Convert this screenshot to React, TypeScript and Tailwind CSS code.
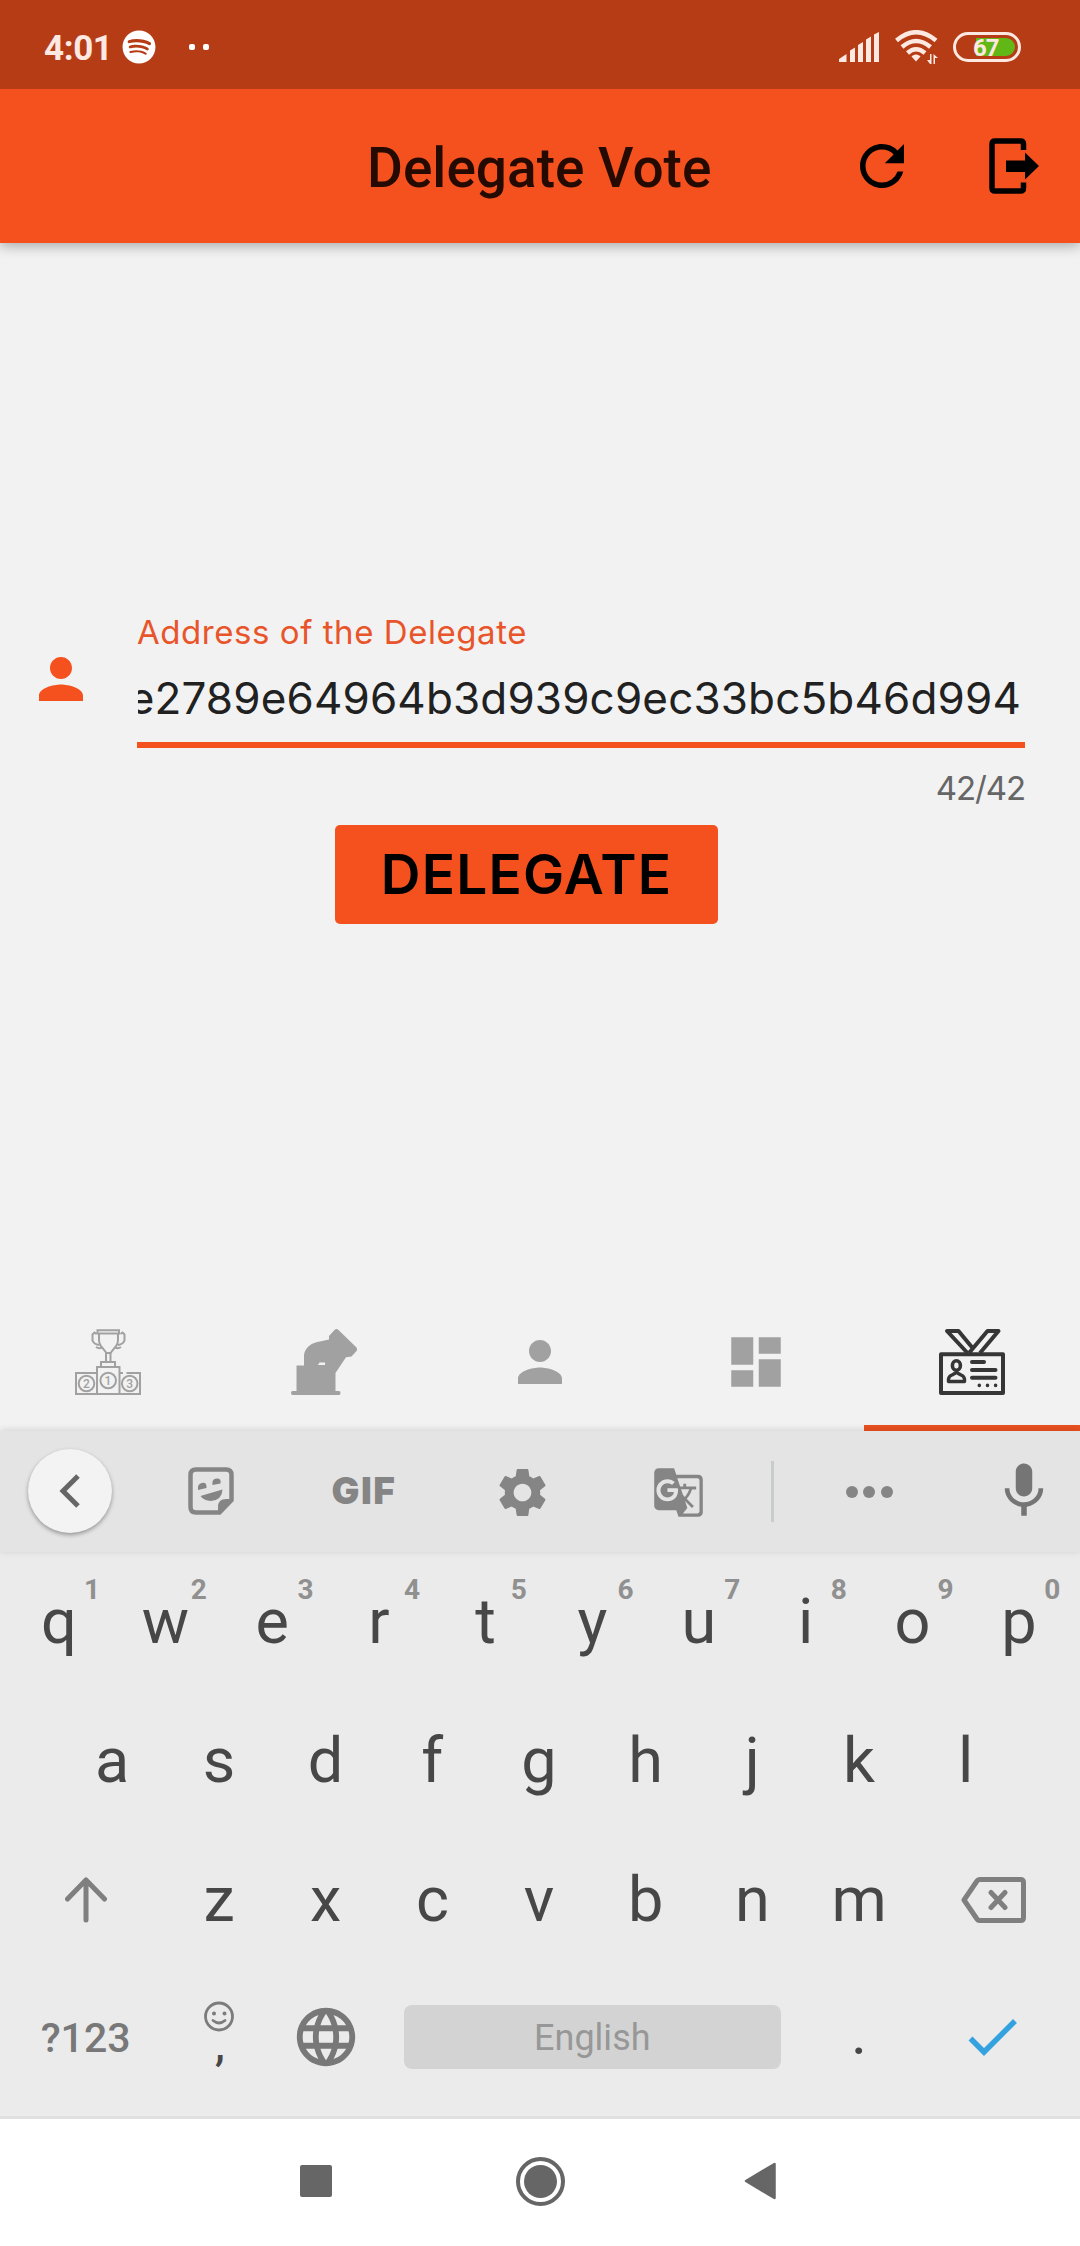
import React from "react";
import { MdRefresh, MdPerson, MdDashboard, MdSettings, MdGTranslate, MdMic, MdLanguage } from "react-icons/md";
import { FaSpotify } from "react-icons/fa";

function StatusBar() {
  return (
    <div className="relative z-20 flex h-[89px] items-center bg-[#b63c16] pl-[44px] pr-[59px] pt-[5px] font-[Roboto,sans-serif] text-[#fde8e2]">
      <span className="w-[78px] pt-[3px] text-[35px] leading-[40px] font-bold tracking-[-0.4px]">4:01</span>
      <FaSpotify className="size-[34px] text-white" />
      <div className="ml-[33px] flex gap-2">
        <i className="size-1.5 rounded-[2px] bg-white" />
        <i className="size-1.5 rounded-[2px] bg-white" />
      </div>
      <svg className="ml-auto" width="40" height="30" viewBox="0 0 40 30" fill="currentColor">
        <path d="M0 27l7.500-5V30H0zM11 18.500l5-3V30h-5zM19 13l5-3V30h-5zM27 7.500l5-3V30h-5zM35 2.500l5-2.500V30h-5z" />
      </svg>
      <svg className="ml-4" width="43" height="34" viewBox="0 0 43 34">
        <g fill="none" stroke="currentColor" strokeWidth="4.500">
          <path d="M1.500 10.500Q21 -6 41 10.500" />
          <path d="M7 17Q21 5 35.500 17" />
          <path d="M12.500 23Q21 15.500 30 23" />
        </g>
        <path d="M21 24.500c2 0 3.500 1 4.500 2L21 31.500l-4.500-5c1-1 2.500-2 4.500-2zM35 24h1.500v10H35l-3-4h3zM38.500 34V24l4.500 4h-3v6z" fill="currentColor" />
      </svg>
      <div className="ml-[15px] flex h-[30px] w-[68px] items-center rounded-full border-[3px] border-[#fde8e2] p-[3px]">
        <div className="relative ml-[17px] h-[18px] flex-1 rounded-r-full bg-[#61b715]">
          <span className="absolute -left-[3px] top-0 text-[24px] leading-[20px] font-bold tracking-[-1px]">67</span>
        </div>
      </div>
    </div>
  );
}

function AppBar() {
  return (
    <header className="relative z-10 flex h-[154px] items-center bg-[#f5511e] pl-[367px] pr-[40px] shadow-[0_3px_12px_rgba(0,0,0,0.3)]">
      <h1 className="w-[482px] pt-[3px] font-[Roboto,sans-serif] text-[55px] leading-[64px] font-medium text-[#240a01]">Delegate Vote</h1>
      <MdRefresh className="size-[66px] text-black" />
      <svg className="ml-auto" width="51" height="56" viewBox="0 0 51 56">
        <path d="M34.500 12V6q0-3-3-3H6Q3 3 3 6v44q0 3 3 3h25.500q3 0 3-3v-5.500" fill="none" stroke="#000" strokeWidth="5.500" />
        <path d="M17 22.500h19v-8L50 28 36 41.500V34H17z" />
      </svg>
    </header>
  );
}

function DelegateForm() {
  return (
    <main className="flex h-[1065px] flex-col items-start pt-[366px] font-[Inter,sans-serif]">
      <div className="flex w-full pl-[27.500px]">
        <MdPerson className="mt-[37px] size-[66px] text-[#f5511e]" />
        <div className="ml-[43.500px] w-[888px]">
          <div className="h-[46px] text-[33px] leading-[46px] tracking-[0.550px] whitespace-nowrap text-[#e9552b]">Address of the Delegate</div>
          <div className="mt-[17px] ml-px flex h-[70px] justify-end overflow-hidden pr-[4px] text-[44px] leading-[52px] tracking-[0.150px] text-[#212121]">
            <span>e2789e64964b3d939c9ec33bc5b46d994</span>
          </div>
          <div className="h-1.5 bg-[#f5511e]" />
          <div className="mt-[17px] text-right text-[33px] leading-[46px] tracking-[-1.100px] text-[#666]">42/42</div>
        </div>
      </div>
      <button className="mt-[13.500px] ml-[335px] h-[99px] w-[383px] rounded-[5px] bg-[#f5511e] text-[55px] leading-[99px] font-semibold tracking-[1.200px] text-black">
        DELEGATE
      </button>
    </main>
  );
}

function PodiumIcon() {
  return (
    <svg width="66" height="66" viewBox="0 0 66 66" fill="none" stroke="#a1a1a1" strokeWidth="2">
      <path d="M22 44H1v21h64V44H51.500M48 44h-3.500M22 65V38h22.500v27" />
      <path d="M26 37.500v-4.500h14v4.500M31 33v-9.500M35.500 33v-9.500" />
      <path d="M22.500 4.500V1.300h21.500v3.200zM24 4.500v6q0 5 3.500 8.500l4 5h4l4-5q3.500-3.500 3.500-8.500v-6M21.500 5l-2-1.500-2 2v6q1 3.500 6.500 4.500M45.500 5l2-1.500 2 2v6q-1 3.500-6.500 4.500M21 18q3 2 6 .5M46 18q-3 2-6 .5" />
      <circle cx="11.500" cy="54.500" r="7.800" />
      <circle cx="33.200" cy="51.500" r="7.800" />
      <circle cx="54.700" cy="54.500" r="7.800" />
      <g fill="#a1a1a1" stroke="none" fontFamily="Roboto, sans-serif" fontSize="12" fontWeight="500" textAnchor="middle">
        <text x="11.500" y="58.800">2</text>
        <text x="33" y="55.800">1</text>
        <text x="54.700" y="58.800">3</text>
      </g>
    </svg>
  );
}

function VoteIcon() {
  return (
    <svg width="66" height="66" viewBox="0 0 66 66" fill="#a1a1a1">
      <path fillRule="evenodd" d="M1.500 62H5.500V36.500H13V26C14 18 21 13.500 29 12.500L38 10.500V7L43.500 1Q45.500-.8 47.500 1L65.500 18.500Q66.500 20 65.500 22L60.500 27.500L55 28.200L44.500 44V62H48Q49.500 62 49.500 64T48 66H1.500Q0 66 0 64T1.500 62zM27 36h7v-2.500h-5.500z" />
    </svg>
  );
}

function BadgeIcon() {
  return (
    <svg width="66" height="66" viewBox="0 0 66 66" fill="none" stroke="#363636" strokeWidth="4" strokeLinejoin="round">
      <path d="M2 25.200h62V64H2z" />
      <path d="M28.500 24L8 2h11.500L34 19.500M30 24L48.500 2h11L41 24" strokeWidth="4" />
      <ellipse cx="17.400" cy="36.500" rx="4" ry="4.700" strokeWidth="3.600" />
      <path d="M9.500 52.500V50q.5-3 3.500-4l4.500-2.500L22 46q3 1 3.500 4v2.500z" strokeWidth="3.400" />
      <path d="M33 33h12M33 41h23.500M33 48.700h23.500" strokeLinecap="round" />
      <path d="M40.300 56.400h0M48.500 56.400h0M56.600 56.400h0" strokeLinecap="round" strokeWidth="3.600" />
    </svg>
  );
}

function TabBar() {
  return (
    <nav className="relative grid h-[123px] grid-cols-5 *:flex *:justify-center *:pt-[21px]">
      <div><PodiumIcon /></div>
      <div><VoteIcon /></div>
      <div><MdPerson className="size-[66px] text-[#a1a1a1]" /></div>
      <div><MdDashboard className="size-[66px] text-[#a1a1a1]" /></div>
      <div className="border-b-[6px] border-[#ea5120]"><BadgeIcon /></div>
    </nav>
  );
}

function KeyboardToolbar() {
  return (
    <div className="relative flex h-[121px] items-center bg-[#e4e4e4] pl-[27.500px] text-[#858585] shadow-[0_-1px_7px_rgba(0,0,0,0.13)]">
      <div className="-mt-px flex size-[84px] items-center justify-center rounded-full bg-[#f3f3f3] shadow-[0_2px_4px_rgba(0,0,0,0.35)]">
        <svg width="22" height="34" viewBox="0 0 22 34"><path d="M19 2L4 17l15 15" fill="none" stroke="#666" strokeWidth="5" /></svg>
      </div>
      <svg className="-mt-px ml-[76px]" width="46" height="48" viewBox="0 0 46 48">
        <path d="M8 2.500h30q5.500 0 5.500 5.500v25L31.500 45.500H8Q2.500 45.500 2.500 40V8Q2.500 2.500 8 2.500z" fill="none" stroke="currentColor" strokeWidth="4.500" />
        <path d="M44 32h-6q-8 0-8 8v7zM10 23q-1-6 4-7t4.500 5zM24.500 18q-1-6 4-6.500T32.500 16.500zM12.500 29L34.500 22.500Q34 33 23 34 15.500 33.500 12.500 29z" fill="currentColor" />
      </svg>
      <span className="-mt-[2px] ml-[98px] w-[68px] font-[Inter,sans-serif] text-[37px] leading-[40px] font-black tracking-[1.500px]">GIF</span>
      <MdSettings className="mt-px ml-[93.500px] size-[59px]" />
      <MdGTranslate className="mt-[2px] ml-[100px] size-[53px]" />
      <div className="ml-[65.500px] h-[61px] w-[3px] bg-[#c8cccb]" />
      <div className="ml-[72px] flex gap-[5.500px]">
        <i className="size-3 rounded-full bg-current" />
        <i className="size-3 rounded-full bg-current" />
        <i className="size-3 rounded-full bg-current" />
      </div>
      <MdMic className="-mt-px ml-[98px] size-[66px] text-[#757575]" />
    </div>
  );
}

function Key({ char, hint }: { char: string; hint?: string }) {
  return (
    <div className="relative w-[106.700px] text-center text-[63px] leading-[139px] text-[#474747]">
      {char}
      {hint && <span className="absolute top-[22px] left-[78.500px] text-[28px] leading-[32px] font-bold text-[#909090]">{hint}</span>}
    </div>
  );
}

function Keyboard() {
  return (
    <section className="h-[564px] bg-[#ebebeb] px-[5.500px] font-[Roboto,sans-serif]">
      <div className="flex h-[138.500px]">
        {"qwertyuiop".split("").map((c, i) => <Key key={c} char={c} hint={"1234567890"[i]} />)}
      </div>
      <div className="flex h-[138.500px] pl-[53.400px]">
        {"asdfghjkl".split("").map((c) => <Key key={c} char={c} />)}
      </div>
      <div className="flex h-[138.500px] items-center pt-[3px]">
        <div className="flex w-[160.200px] justify-center">
          <svg width="42" height="46" viewBox="0 0 42 46"><path d="M21 43V3M2.500 22L21 3l18.500 19" fill="none" stroke="#7f7f7f" strokeWidth="5" strokeLinecap="round" strokeLinejoin="round" /></svg>
        </div>
        {"zxcvbnm".split("").map((c) => <Key key={c} char={c} />)}
        <div className="flex w-[161px] justify-center">
          <svg width="65" height="46" viewBox="0 0 65 46" fill="none" stroke="#7f7f7f" strokeWidth="5" strokeLinecap="round" strokeLinejoin="round">
            <path d="M18.500 2.500H59.500q3 0 3 3v35q0 3-3 3H18.500q-1.500 0-2.500-1.500L3 23 16 4q1-1.500 2.500-1.500zM30 15.500l14 15M44 15.500l-14 15" />
          </svg>
        </div>
      </div>
      <div className="flex h-[138.500px] items-center">
        <div className="w-[160.200px] pt-[3px] text-center text-[41px] leading-[48px] font-medium text-[#787878]">?123</div>
        <div className="flex w-[106.700px] flex-col items-center pb-[9px] text-[#474747]">
          <svg width="30" height="31" viewBox="0 0 30 31" fill="none" stroke="#7c7c7c" strokeWidth="2.800">
            <circle cx="15" cy="15.500" r="13.500" />
            <path d="M9 19.500q6 5 12 0" strokeLinecap="round" />
            <path d="M10 12.500h0M20.500 12.500h0" strokeLinecap="round" strokeWidth="4" />
          </svg>
          <span className="-mt-2.5 h-[42px] pl-0.5 text-[44px] leading-[46px] font-medium">,</span>
        </div>
        <div className="flex w-[106.700px] justify-center"><MdLanguage className="size-[70px] text-[#787878]" /></div>
        <div className="mx-[25px] h-[64px] w-[376.500px] rounded-lg bg-[#d3d3d3] text-center text-[36px] leading-[67px] text-[#979797]">English</div>
        <div className="w-[106.800px] pt-px text-center text-[50px] leading-[60px] font-medium text-[#474747]">.</div>
        <div className="flex w-[160.200px] justify-center pl-0.5">
          <svg width="50" height="40" viewBox="0 0 50 40"><path d="M2.500 21.500L16 35 47 4" fill="none" stroke="#35a2e0" strokeWidth="5.500" /></svg>
        </div>
      </div>
    </section>
  );
}

function NavBar() {
  return (
    <footer className="flex h-[130px] items-center border-t-[3px] border-[#e0e0e0] bg-white pb-[3px] pl-[300px] text-[#666]">
      <div className="size-8 rounded-[2px] bg-[#666]" />
      <div className="ml-[184px] flex size-[49px] items-center justify-center rounded-full border-4 border-[#666]">
        <div className="size-[33px] rounded-full bg-[#666]" />
      </div>
      <svg className="ml-[179px]" width="33" height="38" viewBox="0 0 33 38"><path d="M2 19L30.500 2v34z" fill="currentColor" stroke="currentColor" strokeWidth="2.500" strokeLinejoin="round" /></svg>
    </footer>
  );
}

export default function App() {
  return (
    <div className="h-[2246px] w-[1080px] overflow-hidden bg-[#f2f2f2]">
      <StatusBar />
      <AppBar />
      <DelegateForm />
      <TabBar />
      <KeyboardToolbar />
      <Keyboard />
      <NavBar />
    </div>
  );
}
